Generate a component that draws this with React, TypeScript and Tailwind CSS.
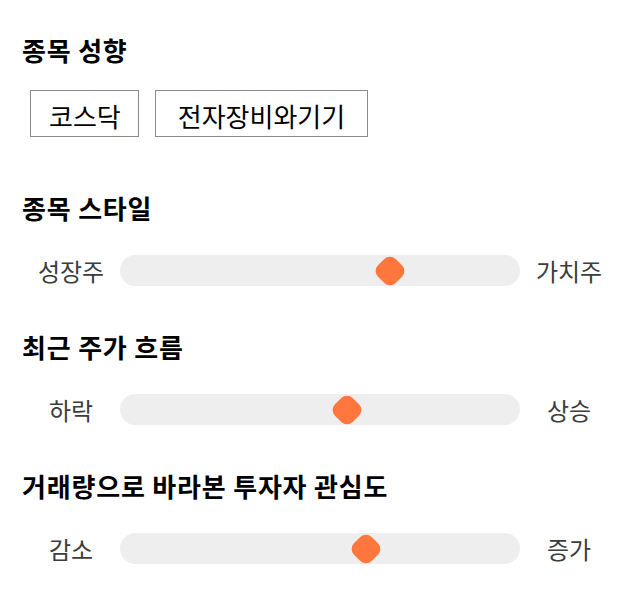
const sectors = [
  { name: '코스닥', pad: 'pl-[18px] pr-[17px]' },
  { name: '전자장비와기기', pad: 'px-[22px]' },
];

const sliders = [
  { title: '종목 스타일', left: '성장주', right: '가치주', pos: 'left-[270px]' },
  { title: '최근 주가 흐름', left: '하락', right: '상승', pos: 'left-[227px]' },
  { title: '거래량으로 바라본 투자자 관심도', left: '감소', right: '증가', pos: 'left-[246px]' },
];

function Heading({ children, className = '' }: { children: React.ReactNode; className?: string }) {
  return (
    <h2 className={`text-[26px] leading-[32px] font-bold text-black tracking-[0.8px] ${className}`}>
      {children}
    </h2>
  );
}

function Slider({ left, right, pos }: { left: string; right: string; pos: string }) {
  return (
    <div className="mt-[31px] grid grid-cols-[98px_1fr_98px] items-center h-[31px]">
      <span className="text-center text-[24px] leading-[31px] text-[#3c3c3c]">{left}</span>
      <div className="relative h-[31px] rounded-full bg-[#eeeeee]">
        <div
          className={`absolute top-1/2 ${pos} w-[25px] h-[25px] -translate-x-1/2 -translate-y-1/2 rotate-45 rounded-[8px] bg-[#ff773d]`}
        />
      </div>
      <span className="text-center text-[24px] leading-[31px] text-[#3c3c3c]">{right}</span>
    </div>
  );
}

export default function App() {
  return (
    <div
      className="w-[640px] h-[606px] bg-white px-[22px] pt-[34px]"
      style={{ fontFamily: '"Noto Sans CJK KR", "Noto Sans", sans-serif' }}
    >
      <Heading>종목 성향</Heading>
      <div className="mt-[24px] ml-[8px] flex gap-[16px]">
        {sectors.map((s) => (
          <div
            key={s.name}
            className={`h-[47px] ${s.pad} pt-[3px] flex items-center border border-[#8a8a8a] text-[26px] text-black`}
          >
            {s.name}
          </div>
        ))}
      </div>

      {sliders.map((s, i) => (
        <div key={s.title}>
          <Heading className={i === 0 ? 'mt-[55px]' : 'mt-[45px]'}>{s.title}</Heading>
          <Slider left={s.left} right={s.right} pos={s.pos} />
        </div>
      ))}
    </div>
  );
}
